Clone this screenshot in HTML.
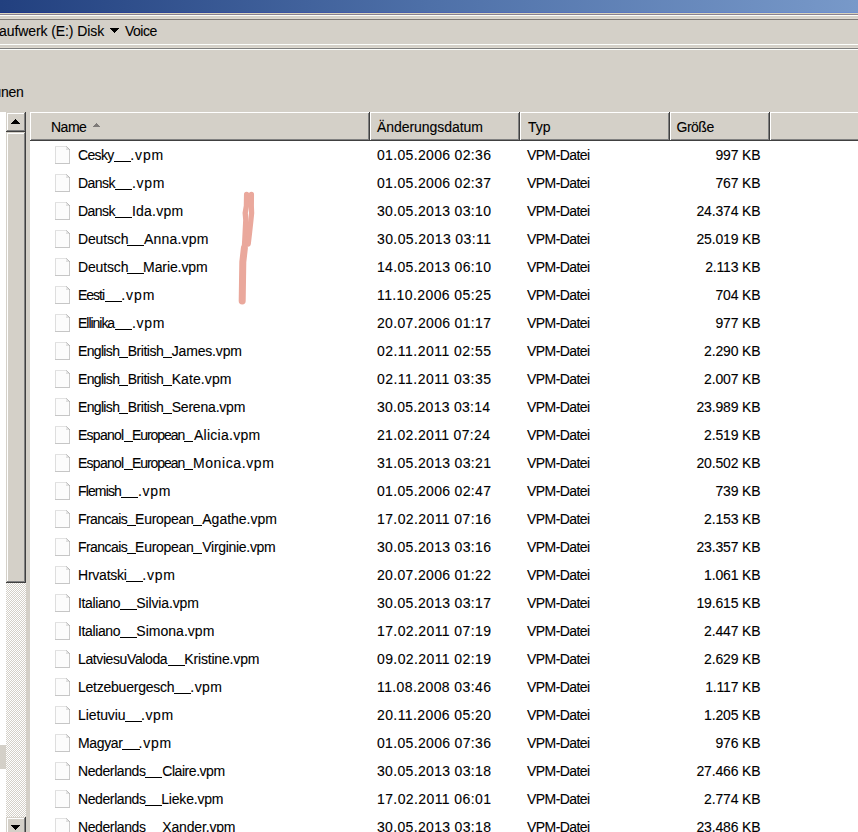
<!DOCTYPE html>
<html><head><meta charset="utf-8"><style>
*{margin:0;padding:0;box-sizing:border-box}
html,body{width:858px;height:832px;overflow:hidden;background:#d4d0c8}
body{position:relative;font-family:"Liberation Sans",sans-serif;color:#000;font-size:14px;-webkit-text-stroke:0.1px #000}
.a{position:absolute}
.title{left:0;top:0;width:858px;height:13px;background:linear-gradient(90deg,#22407f,#4e70a8 50%,#7899c9)}
.title2{left:0;top:12px;width:858px;height:1px;background:linear-gradient(90deg,#1c3488,#4a62b0 50%,#6e90d4)}
.hl{left:0;width:858px;height:1px}
.txt{white-space:pre;line-height:16px}
.list{left:30px;top:112px;width:828px;height:720px;background:#fff}
.r{position:absolute;left:0;width:858px;height:28px;white-space:pre}
.r span{position:absolute;top:6px;line-height:16px}
.r .ic{position:absolute;left:55px;top:5px}
.ub{position:absolute;top:20px;height:1px;background:#000} .d{left:377px} .t{left:527px} .s{right:97.5px;text-align:right}
</style></head><body>
<div class="a title"></div>
<div class="a title2"></div>
<div class="a hl" style="top:13px;background:#d8d4bc"></div>
<div class="a hl" style="top:14px;background:#8c8292"></div>
<div class="a hl" style="top:15px;background:#fbfffb"></div>
<div class="a hl" style="top:16px;height:2px;background:#d6d2ca"></div>
<div class="a hl" style="top:18px;background:#dcd8d2"></div>
<div class="a hl" style="top:19px;background:#7e7a76"></div>
<div class="a hl" style="top:44px;background:#fdfffc"></div>
<div class="a hl" style="top:47px;background:#dedad0"></div>
<div class="a hl" style="top:48px;background:#7f7f7f"></div>
<div class="a hl" style="top:49px;background:#fdfffd"></div>
<div class="a txt" style="left:-1px;top:23px;letter-spacing:-0.090px;">aufwerk (E:) Disk</div>
<svg class="a" style="left:110px;top:28px" width="9" height="5" shape-rendering="crispEdges"><rect x="0" y="0" width="9" height="1"/><rect x="1" y="1" width="7" height="1"/><rect x="2" y="2" width="5" height="1"/><rect x="3" y="3" width="3" height="1"/><rect x="4" y="4" width="1" height="1"/></svg>
<div class="a txt" style="left:125px;top:23px;letter-spacing:-0.500px;">Voice</div>
<div class="a txt" style="left:1px;top:84px;letter-spacing:-0.300px;">nen</div>
<div class="a" style="left:0;top:89px;width:1px;height:8px;background:#5a7ea8;opacity:.8"></div>
<!-- left tree strip -->
<div class="a" style="left:0;top:112px;width:6px;height:720px;background:#fff"></div>
<div class="a" style="left:0;top:745px;width:6px;height:24px;background:#d4d0c8"></div>
<!-- scrollbar -->
<svg class="a" style="left:6px;top:112px" width="24" height="720" shape-rendering="crispEdges"><defs><pattern id="ck" width="2" height="2" patternUnits="userSpaceOnUse"><rect width="2" height="2" fill="#d4d0c8"/><rect width="1" height="1" fill="#fff"/><rect x="1" y="1" width="1" height="1" fill="#fff"/></pattern></defs><rect x="0" y="0" width="24" height="720" fill="#d4d0c8"/><rect x="0" y="471" width="20" height="234" fill="url(#ck)"/><rect x="0" y="0" width="20" height="20" fill="#404040"/><rect x="0" y="0" width="19" height="19" fill="#d4d0c8"/><rect x="1" y="1" width="18" height="18" fill="#808080"/><rect x="1" y="1" width="17" height="17" fill="#fff"/><rect x="2" y="2" width="16" height="16" fill="#d4d0c8"/><rect x="9" y="7" width="1" height="1" fill="#000"/><rect x="8" y="8" width="3" height="1" fill="#000"/><rect x="7" y="9" width="5" height="1" fill="#000"/><rect x="6" y="10" width="7" height="1" fill="#000"/><rect x="5" y="11" width="9" height="1" fill="#000"/><rect x="0" y="20" width="20" height="451" fill="#404040"/><rect x="0" y="20" width="19" height="450" fill="#d4d0c8"/><rect x="1" y="21" width="18" height="449" fill="#808080"/><rect x="1" y="21" width="17" height="448" fill="#fff"/><rect x="2" y="22" width="16" height="447" fill="#d4d0c8"/><rect x="0" y="705" width="20" height="20" fill="#404040"/><rect x="0" y="705" width="19" height="19" fill="#d4d0c8"/><rect x="1" y="706" width="18" height="18" fill="#808080"/><rect x="1" y="706" width="17" height="17" fill="#fff"/><rect x="2" y="707" width="16" height="16" fill="#d4d0c8"/><rect x="9" y="717" width="1" height="1" fill="#000"/><rect x="8" y="716" width="3" height="1" fill="#000"/><rect x="7" y="715" width="5" height="1" fill="#000"/><rect x="6" y="714" width="7" height="1" fill="#000"/><rect x="5" y="713" width="9" height="1" fill="#000"/></svg>
<div class="a list"></div>
<svg class="a" style="left:30px;top:112px" width="828" height="29" shape-rendering="crispEdges">
<rect width="828" height="29" fill="#d4d0c8"/>
<rect width="828" height="1" fill="#fff"/>
<rect y="27" width="828" height="1" fill="#808080"/>
<rect y="28" width="828" height="1" fill="#404040"/>
<rect x="0" y="0" width="1" height="28" fill="#fff"/><rect x="338" y="1" width="1" height="27" fill="#808080"/><rect x="339" y="0" width="1" height="29" fill="#404040"/><rect x="340" y="0" width="1" height="28" fill="#fff"/><rect x="488" y="1" width="1" height="27" fill="#808080"/><rect x="489" y="0" width="1" height="29" fill="#404040"/><rect x="490" y="0" width="1" height="28" fill="#fff"/><rect x="638" y="1" width="1" height="27" fill="#808080"/><rect x="639" y="0" width="1" height="29" fill="#404040"/><rect x="640" y="0" width="1" height="28" fill="#fff"/><rect x="738" y="1" width="1" height="27" fill="#808080"/><rect x="739" y="0" width="1" height="29" fill="#404040"/><rect x="740" y="0" width="1" height="28" fill="#fff"/><rect x="868" y="1" width="1" height="27" fill="#808080"/><rect x="869" y="0" width="1" height="29" fill="#404040"/>
</svg>
<span class="a txt" style="left:51px;top:119px;letter-spacing:-0.500px;">Name</span>
<svg class="a" style="left:93px;top:123px" width="7" height="4" shape-rendering="crispEdges" fill="#7e7a78"><rect x="3" y="0" width="1" height="1"/><rect x="2" y="1" width="3" height="1"/><rect x="1" y="2" width="5" height="1"/><rect x="0" y="3" width="7" height="1"/></svg>
<span class="a txt" style="left:377px;top:119px;letter-spacing:-0.050px;">Änderungsdatum</span>
<span class="a txt" style="left:528px;top:119px;">Typ</span>
<span class="a txt" style="left:676.5px;top:119px;letter-spacing:-0.500px;">Größe</span>
<div class="r" style="top:141px"><svg class="ic" width="15" height="18" shape-rendering="crispEdges"><rect width="15" height="18" fill="#fcfcfc"/><rect x="0" y="0" width="1" height="18" fill="#dedede"/><rect x="0" y="0" width="11" height="1" fill="#e2e2e2"/><rect x="14" y="4" width="1" height="14" fill="#cacaca"/><rect x="0" y="17" width="15" height="1" fill="#c6c6c6"/><rect x="12" y="0" width="3" height="3" fill="#fff"/><rect x="13" y="0" width="2" height="3" fill="#fff"/><rect x="11" y="0" width="1" height="1" fill="#c8c8c8"/><rect x="12" y="1" width="1" height="1" fill="#c0c0c0"/><rect x="13" y="2" width="1" height="1" fill="#b8b8b8"/><rect x="14" y="3" width="1" height="1" fill="#b8b8b8"/><rect x="11" y="1" width="1" height="3" fill="#e8e8e8"/><rect x="12" y="2" width="1" height="2" fill="#e0e0e0"/><rect x="11" y="3" width="3" height="1" fill="#e0e0e0"/></svg><span style="left:78.00px;letter-spacing:-0.650px">Cesky</span><b class="ub" style="left:114.0px;width:17.2px"></b><span style="left:130.30px;letter-spacing:0.867px">.vpm</span><span class="d" style="letter-spacing:0.333px;">01.05.2006 02:36</span><span class="t" style="letter-spacing:-0.562px;">VPM-Datei</span><span class="s" style="letter-spacing:-0.150px;">997 KB</span></div><div class="r" style="top:169px"><svg class="ic" width="15" height="18" shape-rendering="crispEdges"><rect width="15" height="18" fill="#fcfcfc"/><rect x="0" y="0" width="1" height="18" fill="#dedede"/><rect x="0" y="0" width="11" height="1" fill="#e2e2e2"/><rect x="14" y="4" width="1" height="14" fill="#cacaca"/><rect x="0" y="17" width="15" height="1" fill="#c6c6c6"/><rect x="12" y="0" width="3" height="3" fill="#fff"/><rect x="13" y="0" width="2" height="3" fill="#fff"/><rect x="11" y="0" width="1" height="1" fill="#c8c8c8"/><rect x="12" y="1" width="1" height="1" fill="#c0c0c0"/><rect x="13" y="2" width="1" height="1" fill="#b8b8b8"/><rect x="14" y="3" width="1" height="1" fill="#b8b8b8"/><rect x="11" y="1" width="1" height="3" fill="#e8e8e8"/><rect x="12" y="2" width="1" height="2" fill="#e0e0e0"/><rect x="11" y="3" width="3" height="1" fill="#e0e0e0"/></svg><span style="left:78.00px;letter-spacing:-0.550px">Dansk</span><b class="ub" style="left:115.2px;width:17.2px"></b><span style="left:131.90px;letter-spacing:0.733px">.vpm</span><span class="d" style="letter-spacing:0.333px;">01.05.2006 02:37</span><span class="t" style="letter-spacing:-0.562px;">VPM-Datei</span><span class="s" style="letter-spacing:-0.150px;">767 KB</span></div><div class="r" style="top:197px"><svg class="ic" width="15" height="18" shape-rendering="crispEdges"><rect width="15" height="18" fill="#fcfcfc"/><rect x="0" y="0" width="1" height="18" fill="#dedede"/><rect x="0" y="0" width="11" height="1" fill="#e2e2e2"/><rect x="14" y="4" width="1" height="14" fill="#cacaca"/><rect x="0" y="17" width="15" height="1" fill="#c6c6c6"/><rect x="12" y="0" width="3" height="3" fill="#fff"/><rect x="13" y="0" width="2" height="3" fill="#fff"/><rect x="11" y="0" width="1" height="1" fill="#c8c8c8"/><rect x="12" y="1" width="1" height="1" fill="#c0c0c0"/><rect x="13" y="2" width="1" height="1" fill="#b8b8b8"/><rect x="14" y="3" width="1" height="1" fill="#b8b8b8"/><rect x="11" y="1" width="1" height="3" fill="#e8e8e8"/><rect x="12" y="2" width="1" height="2" fill="#e0e0e0"/><rect x="11" y="3" width="3" height="1" fill="#e0e0e0"/></svg><span style="left:78.00px;letter-spacing:-0.550px">Dansk</span><b class="ub" style="left:115.2px;width:17.2px"></b><span style="left:131.90px;letter-spacing:0.250px">Ida.vpm</span><span class="d" style="letter-spacing:0.333px;">30.05.2013 03:10</span><span class="t" style="letter-spacing:-0.562px;">VPM-Datei</span><span class="s" style="letter-spacing:-0.150px;">24.374 KB</span></div><div class="r" style="top:225px"><svg class="ic" width="15" height="18" shape-rendering="crispEdges"><rect width="15" height="18" fill="#fcfcfc"/><rect x="0" y="0" width="1" height="18" fill="#dedede"/><rect x="0" y="0" width="11" height="1" fill="#e2e2e2"/><rect x="14" y="4" width="1" height="14" fill="#cacaca"/><rect x="0" y="17" width="15" height="1" fill="#c6c6c6"/><rect x="12" y="0" width="3" height="3" fill="#fff"/><rect x="13" y="0" width="2" height="3" fill="#fff"/><rect x="11" y="0" width="1" height="1" fill="#c8c8c8"/><rect x="12" y="1" width="1" height="1" fill="#c0c0c0"/><rect x="13" y="2" width="1" height="1" fill="#b8b8b8"/><rect x="14" y="3" width="1" height="1" fill="#b8b8b8"/><rect x="11" y="1" width="1" height="3" fill="#e8e8e8"/><rect x="12" y="2" width="1" height="2" fill="#e0e0e0"/><rect x="11" y="3" width="3" height="1" fill="#e0e0e0"/></svg><span style="left:78.00px;letter-spacing:-0.150px">Deutsch</span><b class="ub" style="left:127.1px;width:17.2px"></b><span style="left:144.10px;letter-spacing:0.171px">Anna.vpm</span><span class="d" style="letter-spacing:0.400px;">30.05.2013 03:11</span><span class="t" style="letter-spacing:-0.562px;">VPM-Datei</span><span class="s" style="letter-spacing:-0.150px;">25.019 KB</span></div><div class="r" style="top:253px"><svg class="ic" width="15" height="18" shape-rendering="crispEdges"><rect width="15" height="18" fill="#fcfcfc"/><rect x="0" y="0" width="1" height="18" fill="#dedede"/><rect x="0" y="0" width="11" height="1" fill="#e2e2e2"/><rect x="14" y="4" width="1" height="14" fill="#cacaca"/><rect x="0" y="17" width="15" height="1" fill="#c6c6c6"/><rect x="12" y="0" width="3" height="3" fill="#fff"/><rect x="13" y="0" width="2" height="3" fill="#fff"/><rect x="11" y="0" width="1" height="1" fill="#c8c8c8"/><rect x="12" y="1" width="1" height="1" fill="#c0c0c0"/><rect x="13" y="2" width="1" height="1" fill="#b8b8b8"/><rect x="14" y="3" width="1" height="1" fill="#b8b8b8"/><rect x="11" y="1" width="1" height="3" fill="#e8e8e8"/><rect x="12" y="2" width="1" height="2" fill="#e0e0e0"/><rect x="11" y="3" width="3" height="1" fill="#e0e0e0"/></svg><span style="left:78.00px;letter-spacing:-0.150px">Deutsch</span><b class="ub" style="left:127.1px;width:17.2px"></b><span style="left:143.10px;letter-spacing:-0.100px">Marie.vpm</span><span class="d" style="letter-spacing:0.333px;">14.05.2013 06:10</span><span class="t" style="letter-spacing:-0.562px;">VPM-Datei</span><span class="s" style="letter-spacing:-0.150px;">2.113 KB</span></div><div class="r" style="top:281px"><svg class="ic" width="15" height="18" shape-rendering="crispEdges"><rect width="15" height="18" fill="#fcfcfc"/><rect x="0" y="0" width="1" height="18" fill="#dedede"/><rect x="0" y="0" width="11" height="1" fill="#e2e2e2"/><rect x="14" y="4" width="1" height="14" fill="#cacaca"/><rect x="0" y="17" width="15" height="1" fill="#c6c6c6"/><rect x="12" y="0" width="3" height="3" fill="#fff"/><rect x="13" y="0" width="2" height="3" fill="#fff"/><rect x="11" y="0" width="1" height="1" fill="#c8c8c8"/><rect x="12" y="1" width="1" height="1" fill="#c0c0c0"/><rect x="13" y="2" width="1" height="1" fill="#b8b8b8"/><rect x="14" y="3" width="1" height="1" fill="#b8b8b8"/><rect x="11" y="1" width="1" height="3" fill="#e8e8e8"/><rect x="12" y="2" width="1" height="2" fill="#e0e0e0"/><rect x="11" y="3" width="3" height="1" fill="#e0e0e0"/></svg><span style="left:78.00px;letter-spacing:-1.025px">Eesti</span><b class="ub" style="left:104.5px;width:17.2px"></b><span style="left:121.30px;letter-spacing:0.933px">.vpm</span><span class="d" style="letter-spacing:0.400px;">11.10.2006 05:25</span><span class="t" style="letter-spacing:-0.562px;">VPM-Datei</span><span class="s" style="letter-spacing:-0.150px;">704 KB</span></div><div class="r" style="top:309px"><svg class="ic" width="15" height="18" shape-rendering="crispEdges"><rect width="15" height="18" fill="#fcfcfc"/><rect x="0" y="0" width="1" height="18" fill="#dedede"/><rect x="0" y="0" width="11" height="1" fill="#e2e2e2"/><rect x="14" y="4" width="1" height="14" fill="#cacaca"/><rect x="0" y="17" width="15" height="1" fill="#c6c6c6"/><rect x="12" y="0" width="3" height="3" fill="#fff"/><rect x="13" y="0" width="2" height="3" fill="#fff"/><rect x="11" y="0" width="1" height="1" fill="#c8c8c8"/><rect x="12" y="1" width="1" height="1" fill="#c0c0c0"/><rect x="13" y="2" width="1" height="1" fill="#b8b8b8"/><rect x="14" y="3" width="1" height="1" fill="#b8b8b8"/><rect x="11" y="1" width="1" height="3" fill="#e8e8e8"/><rect x="12" y="2" width="1" height="2" fill="#e0e0e0"/><rect x="11" y="3" width="3" height="1" fill="#e0e0e0"/></svg><span style="left:78.00px;letter-spacing:-1.029px">Ellinika</span><b class="ub" style="left:115.2px;width:17.2px"></b><span style="left:131.90px;letter-spacing:0.733px">.vpm</span><span class="d" style="letter-spacing:0.333px;">20.07.2006 01:17</span><span class="t" style="letter-spacing:-0.562px;">VPM-Datei</span><span class="s" style="letter-spacing:-0.150px;">977 KB</span></div><div class="r" style="top:337px"><svg class="ic" width="15" height="18" shape-rendering="crispEdges"><rect width="15" height="18" fill="#fcfcfc"/><rect x="0" y="0" width="1" height="18" fill="#dedede"/><rect x="0" y="0" width="11" height="1" fill="#e2e2e2"/><rect x="14" y="4" width="1" height="14" fill="#cacaca"/><rect x="0" y="17" width="15" height="1" fill="#c6c6c6"/><rect x="12" y="0" width="3" height="3" fill="#fff"/><rect x="13" y="0" width="2" height="3" fill="#fff"/><rect x="11" y="0" width="1" height="1" fill="#c8c8c8"/><rect x="12" y="1" width="1" height="1" fill="#c0c0c0"/><rect x="13" y="2" width="1" height="1" fill="#b8b8b8"/><rect x="14" y="3" width="1" height="1" fill="#b8b8b8"/><rect x="11" y="1" width="1" height="3" fill="#e8e8e8"/><rect x="12" y="2" width="1" height="2" fill="#e0e0e0"/><rect x="11" y="3" width="3" height="1" fill="#e0e0e0"/></svg><span style="left:78.00px;letter-spacing:-0.667px">English</span><b class="ub" style="left:118.8px;width:9.2px"></b><span style="left:127.70px;letter-spacing:-0.467px">British</span><b class="ub" style="left:162.8px;width:9.2px"></b><span style="left:171.70px;letter-spacing:-0.163px">James.vpm</span><span class="d" style="letter-spacing:0.467px;">02.11.2011 02:55</span><span class="t" style="letter-spacing:-0.562px;">VPM-Datei</span><span class="s" style="letter-spacing:-0.150px;">2.290 KB</span></div><div class="r" style="top:365px"><svg class="ic" width="15" height="18" shape-rendering="crispEdges"><rect width="15" height="18" fill="#fcfcfc"/><rect x="0" y="0" width="1" height="18" fill="#dedede"/><rect x="0" y="0" width="11" height="1" fill="#e2e2e2"/><rect x="14" y="4" width="1" height="14" fill="#cacaca"/><rect x="0" y="17" width="15" height="1" fill="#c6c6c6"/><rect x="12" y="0" width="3" height="3" fill="#fff"/><rect x="13" y="0" width="2" height="3" fill="#fff"/><rect x="11" y="0" width="1" height="1" fill="#c8c8c8"/><rect x="12" y="1" width="1" height="1" fill="#c0c0c0"/><rect x="13" y="2" width="1" height="1" fill="#b8b8b8"/><rect x="14" y="3" width="1" height="1" fill="#b8b8b8"/><rect x="11" y="1" width="1" height="3" fill="#e8e8e8"/><rect x="12" y="2" width="1" height="2" fill="#e0e0e0"/><rect x="11" y="3" width="3" height="1" fill="#e0e0e0"/></svg><span style="left:78.00px;letter-spacing:-0.667px">English</span><b class="ub" style="left:118.8px;width:9.2px"></b><span style="left:127.70px;letter-spacing:-0.467px">British</span><b class="ub" style="left:162.8px;width:9.2px"></b><span style="left:171.70px;letter-spacing:0.086px">Kate.vpm</span><span class="d" style="letter-spacing:0.467px;">02.11.2011 03:35</span><span class="t" style="letter-spacing:-0.562px;">VPM-Datei</span><span class="s" style="letter-spacing:-0.150px;">2.007 KB</span></div><div class="r" style="top:393px"><svg class="ic" width="15" height="18" shape-rendering="crispEdges"><rect width="15" height="18" fill="#fcfcfc"/><rect x="0" y="0" width="1" height="18" fill="#dedede"/><rect x="0" y="0" width="11" height="1" fill="#e2e2e2"/><rect x="14" y="4" width="1" height="14" fill="#cacaca"/><rect x="0" y="17" width="15" height="1" fill="#c6c6c6"/><rect x="12" y="0" width="3" height="3" fill="#fff"/><rect x="13" y="0" width="2" height="3" fill="#fff"/><rect x="11" y="0" width="1" height="1" fill="#c8c8c8"/><rect x="12" y="1" width="1" height="1" fill="#c0c0c0"/><rect x="13" y="2" width="1" height="1" fill="#b8b8b8"/><rect x="14" y="3" width="1" height="1" fill="#b8b8b8"/><rect x="11" y="1" width="1" height="3" fill="#e8e8e8"/><rect x="12" y="2" width="1" height="2" fill="#e0e0e0"/><rect x="11" y="3" width="3" height="1" fill="#e0e0e0"/></svg><span style="left:78.00px;letter-spacing:-0.667px">English</span><b class="ub" style="left:118.8px;width:9.2px"></b><span style="left:127.70px;letter-spacing:-0.467px">British</span><b class="ub" style="left:162.8px;width:9.2px"></b><span style="left:171.70px;letter-spacing:-0.200px">Serena.vpm</span><span class="d" style="letter-spacing:0.267px;">30.05.2013 03:14</span><span class="t" style="letter-spacing:-0.562px;">VPM-Datei</span><span class="s" style="letter-spacing:-0.150px;">23.989 KB</span></div><div class="r" style="top:421px"><svg class="ic" width="15" height="18" shape-rendering="crispEdges"><rect width="15" height="18" fill="#fcfcfc"/><rect x="0" y="0" width="1" height="18" fill="#dedede"/><rect x="0" y="0" width="11" height="1" fill="#e2e2e2"/><rect x="14" y="4" width="1" height="14" fill="#cacaca"/><rect x="0" y="17" width="15" height="1" fill="#c6c6c6"/><rect x="12" y="0" width="3" height="3" fill="#fff"/><rect x="13" y="0" width="2" height="3" fill="#fff"/><rect x="11" y="0" width="1" height="1" fill="#c8c8c8"/><rect x="12" y="1" width="1" height="1" fill="#c0c0c0"/><rect x="13" y="2" width="1" height="1" fill="#b8b8b8"/><rect x="14" y="3" width="1" height="1" fill="#b8b8b8"/><rect x="11" y="1" width="1" height="3" fill="#e8e8e8"/><rect x="12" y="2" width="1" height="2" fill="#e0e0e0"/><rect x="11" y="3" width="3" height="1" fill="#e0e0e0"/></svg><span style="left:78.00px;letter-spacing:-0.733px">Espanol</span><b class="ub" style="left:123.6px;width:9.2px"></b><span style="left:132.10px;letter-spacing:-1.086px">European</span><b class="ub" style="left:184.2px;width:9.2px"></b><span style="left:193.90px;letter-spacing:0.278px">Alicia.vpm</span><span class="d" style="letter-spacing:0.333px;">21.02.2011 07:24</span><span class="t" style="letter-spacing:-0.562px;">VPM-Datei</span><span class="s" style="letter-spacing:-0.150px;">2.519 KB</span></div><div class="r" style="top:449px"><svg class="ic" width="15" height="18" shape-rendering="crispEdges"><rect width="15" height="18" fill="#fcfcfc"/><rect x="0" y="0" width="1" height="18" fill="#dedede"/><rect x="0" y="0" width="11" height="1" fill="#e2e2e2"/><rect x="14" y="4" width="1" height="14" fill="#cacaca"/><rect x="0" y="17" width="15" height="1" fill="#c6c6c6"/><rect x="12" y="0" width="3" height="3" fill="#fff"/><rect x="13" y="0" width="2" height="3" fill="#fff"/><rect x="11" y="0" width="1" height="1" fill="#c8c8c8"/><rect x="12" y="1" width="1" height="1" fill="#c0c0c0"/><rect x="13" y="2" width="1" height="1" fill="#b8b8b8"/><rect x="14" y="3" width="1" height="1" fill="#b8b8b8"/><rect x="11" y="1" width="1" height="3" fill="#e8e8e8"/><rect x="12" y="2" width="1" height="2" fill="#e0e0e0"/><rect x="11" y="3" width="3" height="1" fill="#e0e0e0"/></svg><span style="left:78.00px;letter-spacing:-0.733px">Espanol</span><b class="ub" style="left:123.6px;width:9.2px"></b><span style="left:132.10px;letter-spacing:-1.086px">European</span><b class="ub" style="left:184.2px;width:9.2px"></b><span style="left:192.90px;letter-spacing:0.611px">Monica.vpm</span><span class="d" style="letter-spacing:0.333px;">31.05.2013 03:21</span><span class="t" style="letter-spacing:-0.562px;">VPM-Datei</span><span class="s" style="letter-spacing:-0.150px;">20.502 KB</span></div><div class="r" style="top:477px"><svg class="ic" width="15" height="18" shape-rendering="crispEdges"><rect width="15" height="18" fill="#fcfcfc"/><rect x="0" y="0" width="1" height="18" fill="#dedede"/><rect x="0" y="0" width="11" height="1" fill="#e2e2e2"/><rect x="14" y="4" width="1" height="14" fill="#cacaca"/><rect x="0" y="17" width="15" height="1" fill="#c6c6c6"/><rect x="12" y="0" width="3" height="3" fill="#fff"/><rect x="13" y="0" width="2" height="3" fill="#fff"/><rect x="11" y="0" width="1" height="1" fill="#c8c8c8"/><rect x="12" y="1" width="1" height="1" fill="#c0c0c0"/><rect x="13" y="2" width="1" height="1" fill="#b8b8b8"/><rect x="14" y="3" width="1" height="1" fill="#b8b8b8"/><rect x="11" y="1" width="1" height="3" fill="#e8e8e8"/><rect x="12" y="2" width="1" height="2" fill="#e0e0e0"/><rect x="11" y="3" width="3" height="1" fill="#e0e0e0"/></svg><span style="left:78.00px;letter-spacing:-0.867px">Flemish</span><b class="ub" style="left:121.2px;width:17.2px"></b><span style="left:137.90px;letter-spacing:0.700px">.vpm</span><span class="d" style="letter-spacing:0.333px;">01.05.2006 02:47</span><span class="t" style="letter-spacing:-0.562px;">VPM-Datei</span><span class="s" style="letter-spacing:-0.150px;">739 KB</span></div><div class="r" style="top:505px"><svg class="ic" width="15" height="18" shape-rendering="crispEdges"><rect width="15" height="18" fill="#fcfcfc"/><rect x="0" y="0" width="1" height="18" fill="#dedede"/><rect x="0" y="0" width="11" height="1" fill="#e2e2e2"/><rect x="14" y="4" width="1" height="14" fill="#cacaca"/><rect x="0" y="17" width="15" height="1" fill="#c6c6c6"/><rect x="12" y="0" width="3" height="3" fill="#fff"/><rect x="13" y="0" width="2" height="3" fill="#fff"/><rect x="11" y="0" width="1" height="1" fill="#c8c8c8"/><rect x="12" y="1" width="1" height="1" fill="#c0c0c0"/><rect x="13" y="2" width="1" height="1" fill="#b8b8b8"/><rect x="14" y="3" width="1" height="1" fill="#b8b8b8"/><rect x="11" y="1" width="1" height="3" fill="#e8e8e8"/><rect x="12" y="2" width="1" height="2" fill="#e0e0e0"/><rect x="11" y="3" width="3" height="1" fill="#e0e0e0"/></svg><span style="left:78.00px;letter-spacing:-0.557px">Francais</span><b class="ub" style="left:127.1px;width:9.2px"></b><span style="left:135.10px;letter-spacing:-0.286px">European</span><b class="ub" style="left:192.5px;width:9.2px"></b><span style="left:202.30px;letter-spacing:-0.022px">Agathe.vpm</span><span class="d" style="letter-spacing:0.400px;">17.02.2011 07:16</span><span class="t" style="letter-spacing:-0.562px;">VPM-Datei</span><span class="s" style="letter-spacing:-0.150px;">2.153 KB</span></div><div class="r" style="top:533px"><svg class="ic" width="15" height="18" shape-rendering="crispEdges"><rect width="15" height="18" fill="#fcfcfc"/><rect x="0" y="0" width="1" height="18" fill="#dedede"/><rect x="0" y="0" width="11" height="1" fill="#e2e2e2"/><rect x="14" y="4" width="1" height="14" fill="#cacaca"/><rect x="0" y="17" width="15" height="1" fill="#c6c6c6"/><rect x="12" y="0" width="3" height="3" fill="#fff"/><rect x="13" y="0" width="2" height="3" fill="#fff"/><rect x="11" y="0" width="1" height="1" fill="#c8c8c8"/><rect x="12" y="1" width="1" height="1" fill="#c0c0c0"/><rect x="13" y="2" width="1" height="1" fill="#b8b8b8"/><rect x="14" y="3" width="1" height="1" fill="#b8b8b8"/><rect x="11" y="1" width="1" height="3" fill="#e8e8e8"/><rect x="12" y="2" width="1" height="2" fill="#e0e0e0"/><rect x="11" y="3" width="3" height="1" fill="#e0e0e0"/></svg><span style="left:78.00px;letter-spacing:-0.557px">Francais</span><b class="ub" style="left:127.1px;width:9.2px"></b><span style="left:135.10px;letter-spacing:-0.286px">European</span><b class="ub" style="left:192.5px;width:9.2px"></b><span style="left:202.30px;letter-spacing:-0.300px">Virginie.vpm</span><span class="d" style="letter-spacing:0.333px;">30.05.2013 03:16</span><span class="t" style="letter-spacing:-0.562px;">VPM-Datei</span><span class="s" style="letter-spacing:-0.150px;">23.357 KB</span></div><div class="r" style="top:561px"><svg class="ic" width="15" height="18" shape-rendering="crispEdges"><rect width="15" height="18" fill="#fcfcfc"/><rect x="0" y="0" width="1" height="18" fill="#dedede"/><rect x="0" y="0" width="11" height="1" fill="#e2e2e2"/><rect x="14" y="4" width="1" height="14" fill="#cacaca"/><rect x="0" y="17" width="15" height="1" fill="#c6c6c6"/><rect x="12" y="0" width="3" height="3" fill="#fff"/><rect x="13" y="0" width="2" height="3" fill="#fff"/><rect x="11" y="0" width="1" height="1" fill="#c8c8c8"/><rect x="12" y="1" width="1" height="1" fill="#c0c0c0"/><rect x="13" y="2" width="1" height="1" fill="#b8b8b8"/><rect x="14" y="3" width="1" height="1" fill="#b8b8b8"/><rect x="11" y="1" width="1" height="3" fill="#e8e8e8"/><rect x="12" y="2" width="1" height="2" fill="#e0e0e0"/><rect x="11" y="3" width="3" height="1" fill="#e0e0e0"/></svg><span style="left:78.00px;letter-spacing:-0.229px">Hrvatski</span><b class="ub" style="left:126.0px;width:17.2px"></b><span style="left:142.30px;letter-spacing:0.733px">.vpm</span><span class="d" style="letter-spacing:0.333px;">20.07.2006 01:22</span><span class="t" style="letter-spacing:-0.562px;">VPM-Datei</span><span class="s" style="letter-spacing:-0.150px;">1.061 KB</span></div><div class="r" style="top:589px"><svg class="ic" width="15" height="18" shape-rendering="crispEdges"><rect width="15" height="18" fill="#fcfcfc"/><rect x="0" y="0" width="1" height="18" fill="#dedede"/><rect x="0" y="0" width="11" height="1" fill="#e2e2e2"/><rect x="14" y="4" width="1" height="14" fill="#cacaca"/><rect x="0" y="17" width="15" height="1" fill="#c6c6c6"/><rect x="12" y="0" width="3" height="3" fill="#fff"/><rect x="13" y="0" width="2" height="3" fill="#fff"/><rect x="11" y="0" width="1" height="1" fill="#c8c8c8"/><rect x="12" y="1" width="1" height="1" fill="#c0c0c0"/><rect x="13" y="2" width="1" height="1" fill="#b8b8b8"/><rect x="14" y="3" width="1" height="1" fill="#b8b8b8"/><rect x="11" y="1" width="1" height="3" fill="#e8e8e8"/><rect x="12" y="2" width="1" height="2" fill="#e0e0e0"/><rect x="11" y="3" width="3" height="1" fill="#e0e0e0"/></svg><span style="left:78.00px;letter-spacing:-0.371px">Italiano</span><b class="ub" style="left:120.0px;width:17.2px"></b><span style="left:136.30px;letter-spacing:-0.144px">Silvia.vpm</span><span class="d" style="letter-spacing:0.333px;">30.05.2013 03:17</span><span class="t" style="letter-spacing:-0.562px;">VPM-Datei</span><span class="s" style="letter-spacing:-0.150px;">19.615 KB</span></div><div class="r" style="top:617px"><svg class="ic" width="15" height="18" shape-rendering="crispEdges"><rect width="15" height="18" fill="#fcfcfc"/><rect x="0" y="0" width="1" height="18" fill="#dedede"/><rect x="0" y="0" width="11" height="1" fill="#e2e2e2"/><rect x="14" y="4" width="1" height="14" fill="#cacaca"/><rect x="0" y="17" width="15" height="1" fill="#c6c6c6"/><rect x="12" y="0" width="3" height="3" fill="#fff"/><rect x="13" y="0" width="2" height="3" fill="#fff"/><rect x="11" y="0" width="1" height="1" fill="#c8c8c8"/><rect x="12" y="1" width="1" height="1" fill="#c0c0c0"/><rect x="13" y="2" width="1" height="1" fill="#b8b8b8"/><rect x="14" y="3" width="1" height="1" fill="#b8b8b8"/><rect x="11" y="1" width="1" height="3" fill="#e8e8e8"/><rect x="12" y="2" width="1" height="2" fill="#e0e0e0"/><rect x="11" y="3" width="3" height="1" fill="#e0e0e0"/></svg><span style="left:78.00px;letter-spacing:-0.371px">Italiano</span><b class="ub" style="left:120.0px;width:17.2px"></b><span style="left:136.30px;letter-spacing:0.022px">Simona.vpm</span><span class="d" style="letter-spacing:0.400px;">17.02.2011 07:19</span><span class="t" style="letter-spacing:-0.562px;">VPM-Datei</span><span class="s" style="letter-spacing:-0.150px;">2.447 KB</span></div><div class="r" style="top:645px"><svg class="ic" width="15" height="18" shape-rendering="crispEdges"><rect width="15" height="18" fill="#fcfcfc"/><rect x="0" y="0" width="1" height="18" fill="#dedede"/><rect x="0" y="0" width="11" height="1" fill="#e2e2e2"/><rect x="14" y="4" width="1" height="14" fill="#cacaca"/><rect x="0" y="17" width="15" height="1" fill="#c6c6c6"/><rect x="12" y="0" width="3" height="3" fill="#fff"/><rect x="13" y="0" width="2" height="3" fill="#fff"/><rect x="11" y="0" width="1" height="1" fill="#c8c8c8"/><rect x="12" y="1" width="1" height="1" fill="#c0c0c0"/><rect x="13" y="2" width="1" height="1" fill="#b8b8b8"/><rect x="14" y="3" width="1" height="1" fill="#b8b8b8"/><rect x="11" y="1" width="1" height="3" fill="#e8e8e8"/><rect x="12" y="2" width="1" height="2" fill="#e0e0e0"/><rect x="11" y="3" width="3" height="1" fill="#e0e0e0"/></svg><span style="left:78.00px;letter-spacing:-0.392px">LatviesuValoda</span><b class="ub" style="left:167.5px;width:17.2px"></b><span style="left:184.30px;letter-spacing:-0.173px">Kristine.vpm</span><span class="d" style="letter-spacing:0.400px;">09.02.2011 02:19</span><span class="t" style="letter-spacing:-0.562px;">VPM-Datei</span><span class="s" style="letter-spacing:-0.150px;">2.629 KB</span></div><div class="r" style="top:673px"><svg class="ic" width="15" height="18" shape-rendering="crispEdges"><rect width="15" height="18" fill="#fcfcfc"/><rect x="0" y="0" width="1" height="18" fill="#dedede"/><rect x="0" y="0" width="11" height="1" fill="#e2e2e2"/><rect x="14" y="4" width="1" height="14" fill="#cacaca"/><rect x="0" y="17" width="15" height="1" fill="#c6c6c6"/><rect x="12" y="0" width="3" height="3" fill="#fff"/><rect x="13" y="0" width="2" height="3" fill="#fff"/><rect x="11" y="0" width="1" height="1" fill="#c8c8c8"/><rect x="12" y="1" width="1" height="1" fill="#c0c0c0"/><rect x="13" y="2" width="1" height="1" fill="#b8b8b8"/><rect x="14" y="3" width="1" height="1" fill="#b8b8b8"/><rect x="11" y="1" width="1" height="3" fill="#e8e8e8"/><rect x="12" y="2" width="1" height="2" fill="#e0e0e0"/><rect x="11" y="3" width="3" height="1" fill="#e0e0e0"/></svg><span style="left:78.00px;letter-spacing:-0.238px">Letzebuergesch</span><b class="ub" style="left:173.5px;width:17.2px"></b><span style="left:190.30px;letter-spacing:0.467px">.vpm</span><span class="d" style="letter-spacing:0.400px;">11.08.2008 03:46</span><span class="t" style="letter-spacing:-0.562px;">VPM-Datei</span><span class="s" style="letter-spacing:-0.150px;">1.117 KB</span></div><div class="r" style="top:701px"><svg class="ic" width="15" height="18" shape-rendering="crispEdges"><rect width="15" height="18" fill="#fcfcfc"/><rect x="0" y="0" width="1" height="18" fill="#dedede"/><rect x="0" y="0" width="11" height="1" fill="#e2e2e2"/><rect x="14" y="4" width="1" height="14" fill="#cacaca"/><rect x="0" y="17" width="15" height="1" fill="#c6c6c6"/><rect x="12" y="0" width="3" height="3" fill="#fff"/><rect x="13" y="0" width="2" height="3" fill="#fff"/><rect x="11" y="0" width="1" height="1" fill="#c8c8c8"/><rect x="12" y="1" width="1" height="1" fill="#c0c0c0"/><rect x="13" y="2" width="1" height="1" fill="#b8b8b8"/><rect x="14" y="3" width="1" height="1" fill="#b8b8b8"/><rect x="11" y="1" width="1" height="3" fill="#e8e8e8"/><rect x="12" y="2" width="1" height="2" fill="#e0e0e0"/><rect x="11" y="3" width="3" height="1" fill="#e0e0e0"/></svg><span style="left:78.00px;letter-spacing:-0.100px">Lietuviu</span><b class="ub" style="left:124.7px;width:17.2px"></b><span style="left:140.90px;letter-spacing:0.667px">.vpm</span><span class="d" style="letter-spacing:0.400px;">20.11.2006 05:20</span><span class="t" style="letter-spacing:-0.562px;">VPM-Datei</span><span class="s" style="letter-spacing:-0.150px;">1.205 KB</span></div><div class="r" style="top:729px"><svg class="ic" width="15" height="18" shape-rendering="crispEdges"><rect width="15" height="18" fill="#fcfcfc"/><rect x="0" y="0" width="1" height="18" fill="#dedede"/><rect x="0" y="0" width="11" height="1" fill="#e2e2e2"/><rect x="14" y="4" width="1" height="14" fill="#cacaca"/><rect x="0" y="17" width="15" height="1" fill="#c6c6c6"/><rect x="12" y="0" width="3" height="3" fill="#fff"/><rect x="13" y="0" width="2" height="3" fill="#fff"/><rect x="11" y="0" width="1" height="1" fill="#c8c8c8"/><rect x="12" y="1" width="1" height="1" fill="#c0c0c0"/><rect x="13" y="2" width="1" height="1" fill="#b8b8b8"/><rect x="14" y="3" width="1" height="1" fill="#b8b8b8"/><rect x="11" y="1" width="1" height="3" fill="#e8e8e8"/><rect x="12" y="2" width="1" height="2" fill="#e0e0e0"/><rect x="11" y="3" width="3" height="1" fill="#e0e0e0"/></svg><span style="left:78.00px;letter-spacing:-0.360px">Magyar</span><b class="ub" style="left:122.4px;width:17.2px"></b><span style="left:138.50px;letter-spacing:0.800px">.vpm</span><span class="d" style="letter-spacing:0.333px;">01.05.2006 07:36</span><span class="t" style="letter-spacing:-0.562px;">VPM-Datei</span><span class="s" style="letter-spacing:-0.150px;">976 KB</span></div><div class="r" style="top:757px"><svg class="ic" width="15" height="18" shape-rendering="crispEdges"><rect width="15" height="18" fill="#fcfcfc"/><rect x="0" y="0" width="1" height="18" fill="#dedede"/><rect x="0" y="0" width="11" height="1" fill="#e2e2e2"/><rect x="14" y="4" width="1" height="14" fill="#cacaca"/><rect x="0" y="17" width="15" height="1" fill="#c6c6c6"/><rect x="12" y="0" width="3" height="3" fill="#fff"/><rect x="13" y="0" width="2" height="3" fill="#fff"/><rect x="11" y="0" width="1" height="1" fill="#c8c8c8"/><rect x="12" y="1" width="1" height="1" fill="#c0c0c0"/><rect x="13" y="2" width="1" height="1" fill="#b8b8b8"/><rect x="14" y="3" width="1" height="1" fill="#b8b8b8"/><rect x="11" y="1" width="1" height="3" fill="#e8e8e8"/><rect x="12" y="2" width="1" height="2" fill="#e0e0e0"/><rect x="11" y="3" width="3" height="1" fill="#e0e0e0"/></svg><span style="left:78.00px;letter-spacing:-0.400px">Nederlands</span><b class="ub" style="left:145.0px;width:17.2px"></b><span style="left:162.30px;letter-spacing:-0.456px">Claire.vpm</span><span class="d" style="letter-spacing:0.333px;">30.05.2013 03:18</span><span class="t" style="letter-spacing:-0.562px;">VPM-Datei</span><span class="s" style="letter-spacing:-0.150px;">27.466 KB</span></div><div class="r" style="top:785px"><svg class="ic" width="15" height="18" shape-rendering="crispEdges"><rect width="15" height="18" fill="#fcfcfc"/><rect x="0" y="0" width="1" height="18" fill="#dedede"/><rect x="0" y="0" width="11" height="1" fill="#e2e2e2"/><rect x="14" y="4" width="1" height="14" fill="#cacaca"/><rect x="0" y="17" width="15" height="1" fill="#c6c6c6"/><rect x="12" y="0" width="3" height="3" fill="#fff"/><rect x="13" y="0" width="2" height="3" fill="#fff"/><rect x="11" y="0" width="1" height="1" fill="#c8c8c8"/><rect x="12" y="1" width="1" height="1" fill="#c0c0c0"/><rect x="13" y="2" width="1" height="1" fill="#b8b8b8"/><rect x="14" y="3" width="1" height="1" fill="#b8b8b8"/><rect x="11" y="1" width="1" height="3" fill="#e8e8e8"/><rect x="12" y="2" width="1" height="2" fill="#e0e0e0"/><rect x="11" y="3" width="3" height="1" fill="#e0e0e0"/></svg><span style="left:78.00px;letter-spacing:-0.400px">Nederlands</span><b class="ub" style="left:145.0px;width:17.2px"></b><span style="left:161.30px;letter-spacing:-0.212px">Lieke.vpm</span><span class="d" style="letter-spacing:0.400px;">17.02.2011 06:01</span><span class="t" style="letter-spacing:-0.562px;">VPM-Datei</span><span class="s" style="letter-spacing:-0.150px;">2.774 KB</span></div><div class="r" style="top:813px"><svg class="ic" width="15" height="18" shape-rendering="crispEdges"><rect width="15" height="18" fill="#fcfcfc"/><rect x="0" y="0" width="1" height="18" fill="#dedede"/><rect x="0" y="0" width="11" height="1" fill="#e2e2e2"/><rect x="14" y="4" width="1" height="14" fill="#cacaca"/><rect x="0" y="17" width="15" height="1" fill="#c6c6c6"/><rect x="12" y="0" width="3" height="3" fill="#fff"/><rect x="13" y="0" width="2" height="3" fill="#fff"/><rect x="11" y="0" width="1" height="1" fill="#c8c8c8"/><rect x="12" y="1" width="1" height="1" fill="#c0c0c0"/><rect x="13" y="2" width="1" height="1" fill="#b8b8b8"/><rect x="14" y="3" width="1" height="1" fill="#b8b8b8"/><rect x="11" y="1" width="1" height="3" fill="#e8e8e8"/><rect x="12" y="2" width="1" height="2" fill="#e0e0e0"/><rect x="11" y="3" width="3" height="1" fill="#e0e0e0"/></svg><span style="left:78.00px;letter-spacing:-0.400px">Nederlands</span><b class="ub" style="left:145.0px;width:17.2px"></b><span style="left:162.30px;letter-spacing:-0.167px">Xander.vpm</span><span class="d" style="letter-spacing:0.333px;">30.05.2013 03:18</span><span class="t" style="letter-spacing:-0.562px;">VPM-Datei</span><span class="s" style="letter-spacing:-0.150px;">23.486 KB</span></div>
<svg class="a" style="left:230px;top:185px" width="30" height="125" fill="none" stroke="#eaa89c" stroke-linejoin="round" stroke-linecap="round"><path d="M16.6 9.5 L16.4 21.0 L15.2 28.0 L15.8 35.0 L14.8 55.0 L13.8 71.0" stroke-width="5.3"/><path d="M21.4 9.5 L21.3 21.0 L21.6 28.0 L20.9 35.0 L19.6 47.0 L18.2 59.0" stroke-width="5.3"/><path d="M14.4 63.0 L12.8 77.0 L12.2 116.0" stroke-width="7"/></svg>
</body></html>
